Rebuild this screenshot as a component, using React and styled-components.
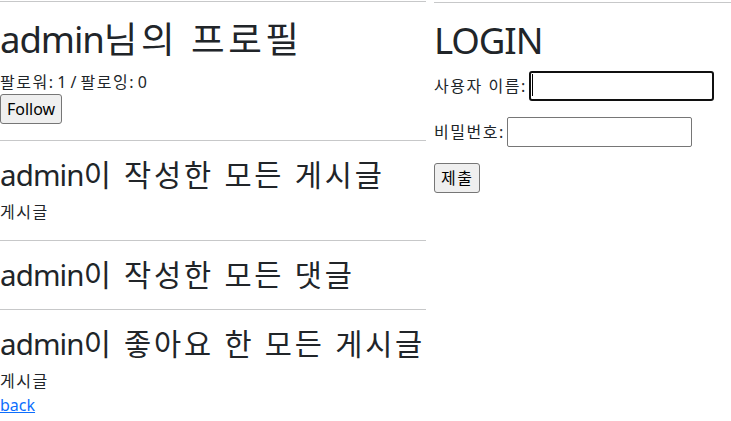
import React from 'react'
import styled, { createGlobalStyle } from 'styled-components';

const GlobalStyle = createGlobalStyle`
  body {
    margin: 0;
    background: #fff;
    color: #212529;
    font-family: "Noto Sans", "Noto Sans CJK KR", sans-serif;
    font-size: 16px;
    line-height: 1.5;
  }
`;

const Page = styled.div`
  display: grid;
  grid-template-columns: 426px 1fr;
  column-gap: 8px;
  align-items: start;
`;

const Column = styled.div`
  display: flex;
  flex-direction: column;
  align-items: flex-start;
`;

const Rule = styled.hr`
  align-self: stretch;
  margin: ${props => props.top || 16}px 0 16px;
  border: 0;
  border-top: 1px solid #212529;
  opacity: 0.25;
`;

// hangul in Noto CJK runs narrower than Malgun Gothic
const Ko = styled.span`
  letter-spacing: 0.095em;
`;

const Title = styled.h1`
  margin: 0 0 8px;
  font-size: 36.6px;
  font-weight: 400;
  line-height: 1.2;
  letter-spacing: -0.03em;
  white-space: nowrap;
`;

const SubTitle = styled.h2`
  margin: 0 0 ${props => props.$bare ? 0 : 8}px;
  font-size: 29.5px;
  font-weight: 400;
  line-height: 1.2;
  letter-spacing: -0.03em;
  white-space: nowrap;
`;

const Text = styled.p`
  margin: 0;
  white-space: nowrap;
`;

const Button = styled.button`
  height: 30px;
  margin: 0;
  padding: 1px 6px;
  font-family: inherit;
  font-size: 16px;
  line-height: 1.5;
  color: #000;
  background: #efefef;
  border: 1px solid #767676;
  border-radius: 3px;
`;

const BackLink = styled.a`
  color: #0d6efd;
  text-decoration: underline;
`;

const FormRow = styled.p`
  display: flex;
  align-items: center;
  gap: 4px;
  height: 30px;
  margin: 0 0 16px;
  white-space: nowrap;
`;

const Field = styled.span`
  position: relative;
  display: inline-flex;
`;

const Input = styled.input`
  box-sizing: border-box;
  width: 185px;
  height: 30px;
  padding: 1px 2px;
  font-family: inherit;
  font-size: 16px;
  background: #fff;
  border: ${props => props.$focused ? '2px solid #101010' : '1px solid #767676'};
  border-radius: ${props => props.$focused ? '3px' : '2px'};
  outline: none;
`;

const Caret = styled.span`
  position: absolute;
  left: 3px;
  top: 3px;
  width: 1px;
  height: 22px;
  background: #000;
`;

function Profile() {
  return (
    <Column>
      <Rule top={1} />
      <Title>admin<Ko>님의 프로필</Ko></Title>
      <Text><Ko>팔로워</Ko>: 1 / <Ko>팔로잉</Ko>: 0</Text>
      <Button type="button">Follow</Button>
      <Rule />
      <SubTitle>admin<Ko>이 작성한 모든 게시글</Ko></SubTitle>
      <Text><Ko>게시글</Ko></Text>
      <Rule />
      <SubTitle $bare>admin<Ko>이 작성한 모든 댓글</Ko></SubTitle>
      <Rule />
      <SubTitle>admin<Ko>이 좋아요 한 모든 게시글</Ko></SubTitle>
      <Text><Ko>게시글</Ko></Text>
      <BackLink href="#">back</BackLink>
    </Column>
  );
}

function Login() {
  return (
    <Column>
      <Rule top={2} />
      <Title>LOGIN</Title>
      <FormRow>
        <label htmlFor="username"><Ko>사용자 이름</Ko>:</label>
        <Field>
          <Input id="username" type="text" $focused />
          <Caret />
        </Field>
      </FormRow>
      <FormRow>
        <label htmlFor="password"><Ko>비밀번호</Ko>:</label>
        <Field>
          <Input id="password" type="password" />
        </Field>
      </FormRow>
      <Button type="submit"><Ko>제출</Ko></Button>
    </Column>
  );
}

function App() {
  return (
    <>
      <GlobalStyle />
      <Page>
        <Profile />
        <Login />
      </Page>
    </>
  );
}

export default App;
